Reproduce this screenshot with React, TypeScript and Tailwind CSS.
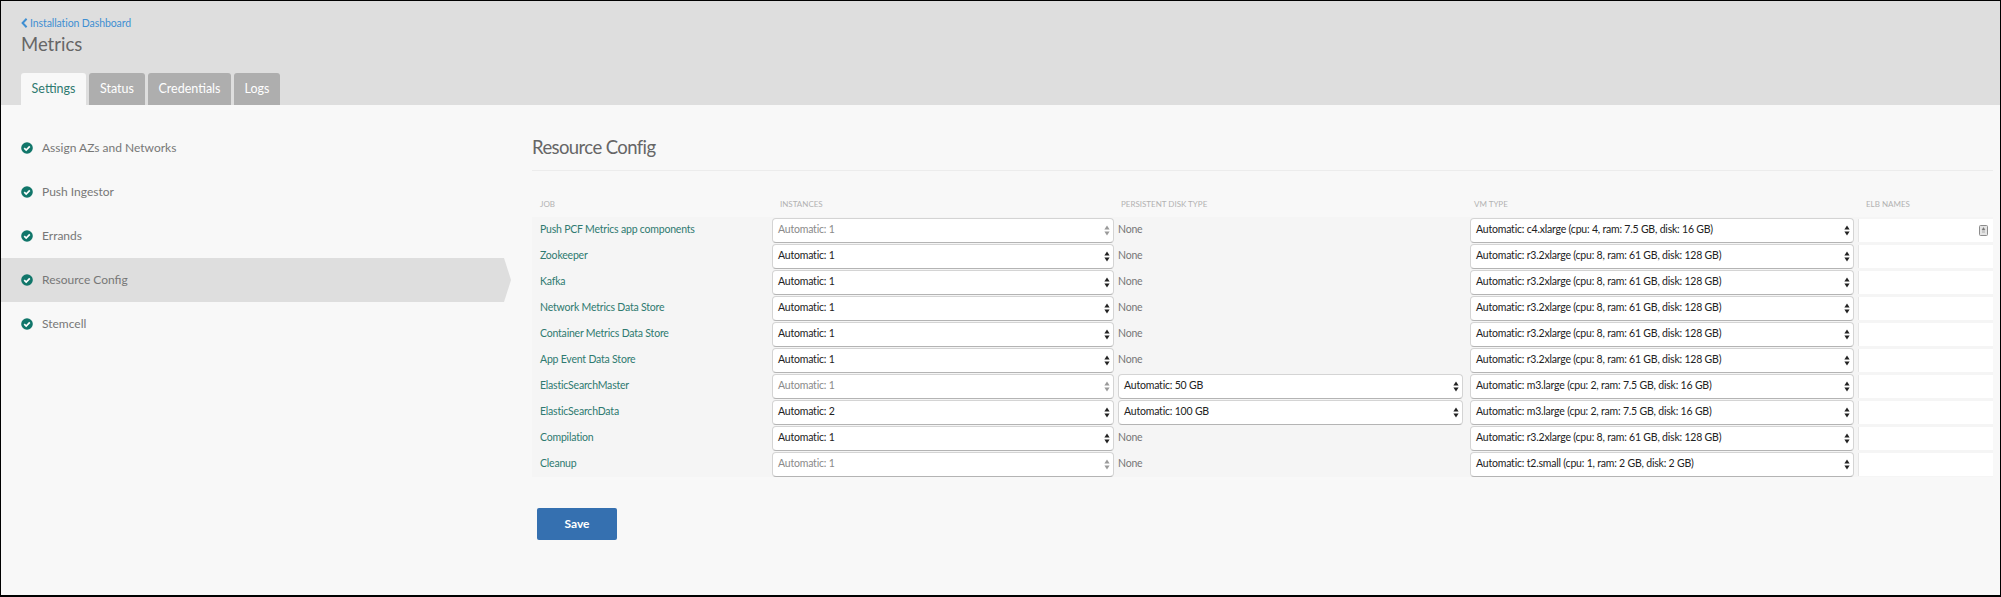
const FONT = "font-['Lato','Noto_Sans',sans-serif]";

type Row = {
  job: string;
  instances: string;
  instancesDisabled?: boolean;
  disk?: string;
  vm: string;
};

const rows: Row[] = [
  { job: "Push PCF Metrics app components", instances: "Automatic: 1", instancesDisabled: true, vm: "Automatic: c4.xlarge (cpu: 4, ram: 7.5 GB, disk: 16 GB)" },
  { job: "Zookeeper", instances: "Automatic: 1", vm: "Automatic: r3.2xlarge (cpu: 8, ram: 61 GB, disk: 128 GB)" },
  { job: "Kafka", instances: "Automatic: 1", vm: "Automatic: r3.2xlarge (cpu: 8, ram: 61 GB, disk: 128 GB)" },
  { job: "Network Metrics Data Store", instances: "Automatic: 1", vm: "Automatic: r3.2xlarge (cpu: 8, ram: 61 GB, disk: 128 GB)" },
  { job: "Container Metrics Data Store", instances: "Automatic: 1", vm: "Automatic: r3.2xlarge (cpu: 8, ram: 61 GB, disk: 128 GB)" },
  { job: "App Event Data Store", instances: "Automatic: 1", vm: "Automatic: r3.2xlarge (cpu: 8, ram: 61 GB, disk: 128 GB)" },
  { job: "ElasticSearchMaster", instances: "Automatic: 1", instancesDisabled: true, disk: "Automatic: 50 GB", vm: "Automatic: m3.large (cpu: 2, ram: 7.5 GB, disk: 16 GB)" },
  { job: "ElasticSearchData", instances: "Automatic: 2", disk: "Automatic: 100 GB", vm: "Automatic: m3.large (cpu: 2, ram: 7.5 GB, disk: 16 GB)" },
  { job: "Compilation", instances: "Automatic: 1", vm: "Automatic: r3.2xlarge (cpu: 8, ram: 61 GB, disk: 128 GB)" },
  { job: "Cleanup", instances: "Automatic: 1", instancesDisabled: true, vm: "Automatic: t2.small (cpu: 1, ram: 2 GB, disk: 2 GB)" },
];

const steps = ["Assign AZs and Networks", "Push Ingestor", "Errands", "Resource Config", "Stemcell"];

function Check() {
  return (
    <svg width="12" height="12" viewBox="0 0 12 12" className="shrink-0">
      <circle cx="6" cy="6" r="5.8" fill="#11766a" />
      <path d="M3.2 6.1 L5.2 8 L8.8 4.3" fill="none" stroke="#fff" strokeWidth="1.7" />
    </svg>
  );
}

function Arrows({ muted }: { muted?: boolean }) {
  const fill = muted ? "#9a9a9a" : "#222";
  return (
    <svg width="6" height="11" viewBox="0 0 6 11" className="shrink-0">
      <path d="M3 0.5 L5.6 4.4 H0.4 Z" fill={fill} />
      <path d="M3 10.5 L5.6 6.6 H0.4 Z" fill={fill} />
    </svg>
  );
}

function Select({ value, muted }: { value: string; muted?: boolean }) {
  return (
    <div className="flex h-[25px] w-full items-center justify-between rounded-[4px] border border-[#d4d4d4] border-b-[#b4b4b4] bg-white pl-[5px] pr-[3px]">
      <span className={muted ? "text-[#8a8a8a]" : "text-[#222]"}>{value}</span>
      <Arrows muted={muted} />
    </div>
  );
}

function Th({ children, className = "" }: { children: string; className?: string }) {
  return <div className={`flex h-[14px] items-center text-[8px] uppercase text-[#b2b2b2] ${className}`}>{children}</div>;
}

export default function App() {
  return (
    <div className={`flex h-[597px] w-[2001px] flex-col overflow-hidden border border-b-2 border-black bg-[#f8f8f8] ${FONT}`}>
      <header className="h-[104px] shrink-0 bg-[#dedede] pl-[20px]">
        <a className="flex items-center gap-[2px] pt-[16px] text-[10.5px] leading-[12px] tracking-[-0.1px] text-[#3f8fd2]">
          <svg width="7" height="10" viewBox="0 0 7 10"><path d="M5.6 0.8 L1.6 5 L5.6 9.2" fill="none" stroke="#3f8fd2" strokeWidth="2" /></svg>
          Installation Dashboard
        </a>
        <h1 className="mt-[1px] text-[18.5px] leading-[28px] font-normal text-[#666]">Metrics</h1>
        <nav className="mt-[15px] flex items-end gap-[3px] text-[12.5px]">
          <span className="flex h-[32px] w-[65px] items-center justify-center rounded-t-[3px] bg-[#f8f8f8] text-[#2f7a70]">Settings</span>
          <span className="flex h-[32px] w-[56px] items-center justify-center rounded-t-[3px] bg-[#aeaeae] text-white">Status</span>
          <span className="flex h-[32px] w-[83px] items-center justify-center rounded-t-[3px] bg-[#aeaeae] text-white">Credentials</span>
          <span className="flex h-[32px] w-[46px] items-center justify-center rounded-t-[3px] bg-[#aeaeae] text-white">Logs</span>
        </nav>
      </header>
      <div className="flex flex-1">
        <aside className="w-[510px] shrink-0 pt-[21px]">
          {steps.map((s) => (
            <div
              key={s}
              className={`flex h-[44px] items-center gap-[9px] pl-[20px] text-[12px] text-[#777] ${s === "Resource Config" ? "bg-[#dedede] [clip-path:polygon(0_0,503px_0,510px_50%,503px_100%,0_100%)]" : ""}`}
            >
              <Check />
              <span>{s}</span>
            </div>
          ))}
        </aside>
        <main className="ml-[21px] flex-1 pr-[7px] pt-[28px]">
          <h2 className="border-b border-[#ececec] pb-[9px] text-[18.5px] leading-[28px] font-normal tracking-[-0.6px] text-[#666]">Resource Config</h2>
          <div className="mt-[26px] grid grid-cols-[240px_343px_355px_388px_135px] pb-[6px]">
            <Th className="pl-[8px]">Job</Th>
            <Th className="pl-[8px]">Instances</Th>
            <Th className="pl-[6px]">Persistent Disk Type</Th>
            <Th className="pl-[4px]">VM Type</Th>
            <Th className="pl-[8px]">ELB Names</Th>
          </div>
          <div className="text-[10.5px] tracking-[-0.2px]">
            {rows.map((r, i) => (
              <div key={r.job} className="grid h-[26px] grid-cols-[240px_343px_355px_388px_135px] items-center bg-[#f5f5f5]">
                <div className="pl-[8px] text-[#2f7a70]">{r.job}</div>
                <div className="pr-[1px]"><Select value={r.instances} muted={r.instancesDisabled} /></div>
                <div className="pl-[3px] pr-[7px]">
                  {r.disk ? <Select value={r.disk} /> : <span className="text-[#777]">None</span>}
                </div>
                <div className="pr-[4px]"><Select value={r.vm} /></div>
                <div>
                  <div className="flex h-[23px] items-center justify-end border-l border-[#e6e6e6] bg-white pr-[5px]">
                    {i === 0 && (
                      <svg width="9" height="11" viewBox="0 0 9 11">
                        <rect x="0.5" y="0.5" width="8" height="10" rx="1" fill="#e4e4e4" stroke="#8c8c8c" />
                        <path d="M4.5 2.5 L6 5 H3 Z M3 7 H6" fill="#777" stroke="#777" strokeWidth="0.5" />
                      </svg>
                    )}
                  </div>
                </div>
              </div>
            ))}
          </div>
          <button className="ml-[5px] mt-[31px] h-[32px] w-[80px] rounded-[2px] bg-[#3570b0] text-[12px] font-bold text-white">Save</button>
        </main>
      </div>
    </div>
  );
}
